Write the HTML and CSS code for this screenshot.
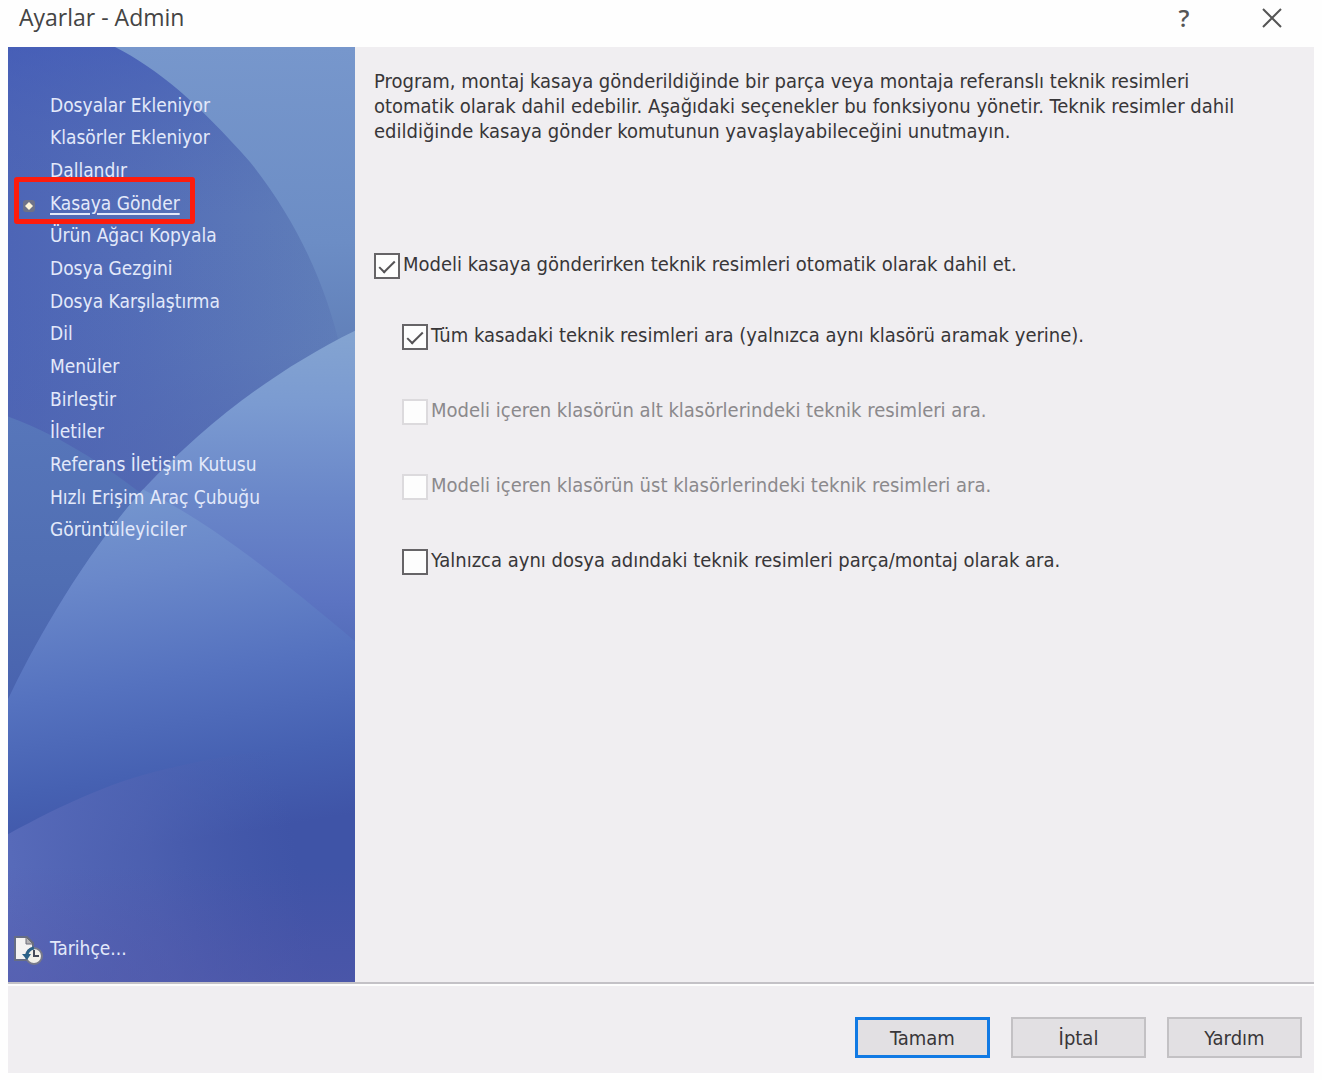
FILE: index.html
```html
<!DOCTYPE html>
<html lang="tr">
<head>
  <title>Ayarlar - Admin</title>
  <meta charset="UTF-8">
  <meta name="viewport" content="width=device-width, initial-scale=1">
  <link rel="stylesheet" href="styles.css">
</head>
<body>

<div class="dialog">
  <header class="title-bar">
    <h1>Ayarlar - Admin</h1>
    <div class="window-buttons">
      <button type="button" class="window-btn" aria-label="Yardım">?</button>
      <button type="button" class="window-btn" aria-label="Kapat">
        <svg width="20" height="20" viewBox="0 0 20 20"><path d="M1 1 L19 19 M19 1 L1 19" stroke="#555" stroke-width="2" fill="none"/></svg>
      </button>
    </div>
  </header>

  <div class="dialog-body">
    <aside class="sidebar">
      <svg class="sidebar-bg" viewBox="0 0 347 936" preserveAspectRatio="none" aria-hidden="true">
        <defs>
          <linearGradient id="base" x1="0" y1="0" x2="1" y2="0">
            <stop offset="0" stop-color="#4d65b6"/>
            <stop offset="0.4" stop-color="#546eb7"/>
            <stop offset="1" stop-color="#6180b9"/>
          </linearGradient>
          <linearGradient id="baseShade" x1="0" y1="0" x2="0" y2="1">
            <stop offset="0" stop-color="#4058b8" stop-opacity="0.5"/>
            <stop offset="0.3" stop-color="#5068b4" stop-opacity="0"/>
            <stop offset="0.55" stop-color="#5064b0" stop-opacity="0.1"/>
            <stop offset="1" stop-color="#5064b0" stop-opacity="1"/>
          </linearGradient>
          <linearGradient id="corner" x1="0" y1="0" x2="0" y2="1">
            <stop offset="0" stop-color="#7797cc"/>
            <stop offset="0.65" stop-color="#6c8dc5"/>
            <stop offset="1" stop-color="#6180b9"/>
          </linearGradient>
          <linearGradient id="leftArc" x1="0" y1="0" x2="0" y2="1">
            <stop offset="0" stop-color="#5776ba"/>
            <stop offset="0.5" stop-color="#506eb3"/>
            <stop offset="1" stop-color="#465ead"/>
          </linearGradient>
          <linearGradient id="bright" gradientUnits="userSpaceOnUse" x1="0" y1="284" x2="0" y2="620">
            <stop offset="0" stop-color="#84a4d1"/>
            <stop offset="0.22" stop-color="#7b9bd1"/>
            <stop offset="0.5" stop-color="#6a87c9"/>
            <stop offset="0.8" stop-color="#5c74c2"/>
            <stop offset="1" stop-color="#5069b6"/>
          </linearGradient>
          <linearGradient id="cross" gradientUnits="userSpaceOnUse" x1="90" y1="440" x2="150" y2="800">
            <stop offset="0" stop-color="#7698cf"/>
            <stop offset="0.25" stop-color="#6a88ca"/>
            <stop offset="0.55" stop-color="#5572bf"/>
            <stop offset="0.8" stop-color="#4661b2"/>
            <stop offset="1" stop-color="#3f54a7"/>
          </linearGradient>
          <linearGradient id="bottom" gradientUnits="userSpaceOnUse" x1="0" y1="860" x2="290" y2="810">
            <stop offset="0" stop-color="#586bba"/>
            <stop offset="0.5" stop-color="#5164b3" stop-opacity="0.7"/>
            <stop offset="1" stop-color="#4a5eae" stop-opacity="0"/>
          </linearGradient>
          <linearGradient id="violet" gradientUnits="userSpaceOnUse" x1="0" y1="820" x2="0" y2="936">
            <stop offset="0" stop-color="#5552a8" stop-opacity="0"/>
            <stop offset="1" stop-color="#5558aa" stop-opacity="0.5"/>
          </linearGradient>
        </defs>
        <rect width="347" height="936" fill="url(#base)"/>
        <rect width="347" height="560" fill="url(#baseShade)"/>
        <path d="M107 0 C150 22 190 56 242 115 C290 175 318 240 332 300 L347 284 V0 Z" fill="url(#corner)"/>
        <path d="M0 370 C60 392 105 425 150 460 V700 H0 Z" fill="url(#leftArc)"/>
        <path d="M347 284 C270 322 200 374 135 443 C75 510 25 600 0 653 V936 H347 Z" fill="url(#bright)"/>
        <path d="M135 443 C200 474 270 530 347 595 V936 H0 V653 C25 600 75 510 135 443 Z" fill="url(#cross)"/>
        <path d="M0 788 C55 758 110 732 170 720 C230 706 290 700 347 700 V936 H0 Z" fill="url(#bottom)"/>
        <rect y="820" width="347" height="116" fill="url(#violet)"/>
      </svg>
      <nav class="sidebar-nav">
        <ul class="nav-list">
          <li><a href="#">Dosyalar Ekleniyor</a></li>
          <li><a href="#">Klasörler Ekleniyor</a></li>
          <li><a href="#">Dallandır</a></li>
          <li class="active">
            <svg class="marker" width="14" height="14" viewBox="0 0 14 14"><rect x="1" y="1" width="12" height="12" rx="3" fill="#6d7288"/><path d="M7 3 L11 7 L7 11 L3 7 Z" fill="#fff6d8"/></svg>
            <a href="#" aria-current="page">Kasaya Gönder</a>
          </li>
          <li><a href="#">Ürün Ağacı Kopyala</a></li>
          <li><a href="#">Dosya Gezgini</a></li>
          <li><a href="#">Dosya Karşılaştırma</a></li>
          <li><a href="#">Dil</a></li>
          <li><a href="#">Menüler</a></li>
          <li><a href="#">Birleştir</a></li>
          <li><a href="#">İletiler</a></li>
          <li><a href="#">Referans İletişim Kutusu</a></li>
          <li><a href="#">Hızlı Erişim Araç Çubuğu</a></li>
          <li><a href="#">Görüntüleyiciler</a></li>
        </ul>
        <a href="#" class="history">
          <svg width="32" height="32" viewBox="0 0 32 32" aria-hidden="true">
            <path d="M2 3 H14 L20 9 V26 H2 Z" fill="#f4f3f2" stroke="#666d84" stroke-width="2"/>
            <path d="M13 3 V10 H20 Z" fill="#b5b4b4" stroke="#6c6d78"/>
            <circle cx="21" cy="22" r="8" fill="#f2f0e9" stroke="#77798a" stroke-width="2"/>
            <path d="M21 16 V22 H26" fill="none" stroke="#454a58" stroke-width="2"/>
            <path d="M21 14 C16 15 14 18 14 22" fill="none" stroke="#2c6288" stroke-width="3"/>
            <path d="M9 20 H18 L14 26 Z" fill="#2c6288"/>
          </svg>
          <span>Tarihçe...</span>
        </a>
      </nav>
    </aside>

    <main class="content">
      <p class="intro">Program, montaj kasaya gönderildiğinde bir parça veya montaja referanslı teknik resimleri otomatik olarak dahil edebilir. Aşağıdaki seçenekler bu fonksiyonu yönetir. Teknik resimler dahil edildiğinde kasaya gönder komutunun yavaşlayabileceğini unutmayın.</p>

      <form id="settingsForm">
        <div class="option">
          <input type="checkbox" id="autoInclude" checked>
          <label for="autoInclude">Modeli kasaya gönderirken teknik resimleri otomatik olarak dahil et.</label>
        </div>
        <div class="sub-options">
          <div class="option">
            <input type="checkbox" id="searchVault" checked>
            <label for="searchVault">Tüm kasadaki teknik resimleri ara (yalnızca aynı klasörü aramak yerine).</label>
          </div>
          <div class="option">
            <input type="checkbox" id="searchSub" disabled>
            <label for="searchSub">Modeli içeren klasörün alt klasörlerindeki teknik resimleri ara.</label>
          </div>
          <div class="option">
            <input type="checkbox" id="searchParent" disabled>
            <label for="searchParent">Modeli içeren klasörün üst klasörlerindeki teknik resimleri ara.</label>
          </div>
          <div class="option">
            <input type="checkbox" id="sameName">
            <label for="sameName">Yalnızca aynı dosya adındaki teknik resimleri parça/montaj olarak ara.</label>
          </div>
        </div>
      </form>
    </main>
  </div>

  <footer class="dialog-footer">
    <button type="submit" form="settingsForm" class="btn btn-default">Tamam</button>
    <button type="button" class="btn">İptal</button>
    <button type="button" class="btn">Yardım</button>
  </footer>
</div>

</body>
</html>
```
FILE: styles.css
```css
*,
*::before,
*::after {
  box-sizing: border-box;
}

body {
  margin: 0;
  background-color: #fefefe;
  color: #383638;
  font-family: "DejaVu Sans Condensed", "DejaVu Sans", Tahoma, sans-serif;
  font-size: 20px;
  line-height: 25px;
}

.dialog {
  display: flex;
  flex-direction: column;
  min-height: calc(100vh - 7px);
  margin: 0 8px 7px;
}

/* Title bar */
.title-bar {
  display: flex;
  justify-content: space-between;
  align-items: center;
  height: 47px;
  padding: 0 30px 12px 11px;
}

h1 {
  margin: 0;
  color: #444;
  font-family: "Open Sans", "Noto Sans", sans-serif;
  font-size: 23px;
  font-weight: normal;
}

.window-buttons {
  display: flex;
  gap: 64px;
}

.window-btn {
  display: flex;
  justify-content: center;
  align-items: center;
  width: 24px;
  height: 24px;
  padding: 0;
  border: none;
  background: none;
  color: #555;
  font-family: "Open Sans", "Noto Sans", sans-serif;
  font-size: 24px;
  font-weight: 600;
  cursor: pointer;
}

/* Sidebar */
.dialog-body {
  display: flex;
  flex: 1;
  border-bottom: 2px solid #c3c1c6;
}

.sidebar {
  position: relative;
  display: flex;
  flex: 0 0 347px;
  font-size: 19px;
}

/* backdrop under the links */
.sidebar-bg {
  position: absolute;
  inset: 0;
  width: 100%;
  height: 100%;
}

.sidebar-nav {
  z-index: 1;
  display: flex;
  flex: 1;
  flex-direction: column;
  justify-content: space-between;
  padding: 42px 0 16px;
}

.nav-list {
  display: grid;
  grid-auto-rows: 1fr;
  min-height: 457px;
  margin: 0;
  padding: 0;
  list-style: none;
}

.nav-list li {
  display: flex;
  align-items: center;
  padding-left: 42px;
}

.sidebar a {
  color: #e3e9fa;
  text-decoration: none;
}

.nav-list .active {
  position: relative;
  z-index: 1;
}

.sidebar .active a {
  text-decoration: underline;
  text-decoration-thickness: 2px;
  text-underline-offset: 3px;
}

/* red frame round the selected page */
.active::after {
  content: "";
  position: absolute;
  top: -10px;
  left: 6px;
  width: 181px;
  height: 47px;
  border: 5px solid #fd1c0d;
  border-radius: 3px;
  pointer-events: none;
}

.marker {
  position: absolute;
  top: 12px;
  left: 14px;
}

.history {
  display: flex;
  align-items: center;
  gap: 5px;
  padding-left: 5px;
}

.history span,
.option label {
  padding-bottom: 3px;
}

/* Content */
.content {
  flex: 1;
  padding: 22px 64px 22px 19px;
  background-color: #f0eef1;
}

.intro {
  margin: 0 0 108px;
}

.option {
  display: flex;
  align-items: center;
  gap: 3px;
}

.sub-options {
  display: flex;
  flex-direction: column;
  gap: 47px;
  margin: 43px 0 0 28px;
}

.option input {
  flex: none;
  appearance: none;
  display: grid;
  place-items: center;
  width: 26px;
  height: 26px;
  margin: 0;
  border: 2px solid #666467;
  background-color: #fdfdfd;
}

.option input:checked::before {
  content: "";
  width: 16px;
  height: 8px;
  margin-bottom: 3px;
  border: solid #555356;
  border-width: 0 0 2px 2px;
  transform: rotate(-45deg);
}

.option input:disabled {
  border-color: #dcdadd;
}

.option input:disabled + label {
  color: #8b898c;
}

/* Footer */
.dialog-footer {
  display: flex;
  justify-content: flex-end;
  gap: 21px;
  padding: 31px 12px 15px;
  border-top: 2px solid #fdfdfd;
  background-color: #f0eef1;
}

.btn {
  width: 135px;
  height: 41px;
  padding: 0;
  border: 2px solid #c3c1c4;
  background-color: #e2e0e3;
  color: #383638;
  font-family: inherit;
  font-size: 20px;
  cursor: pointer;
}

.btn-default {
  border: 3px solid #117ae4;
}
```
